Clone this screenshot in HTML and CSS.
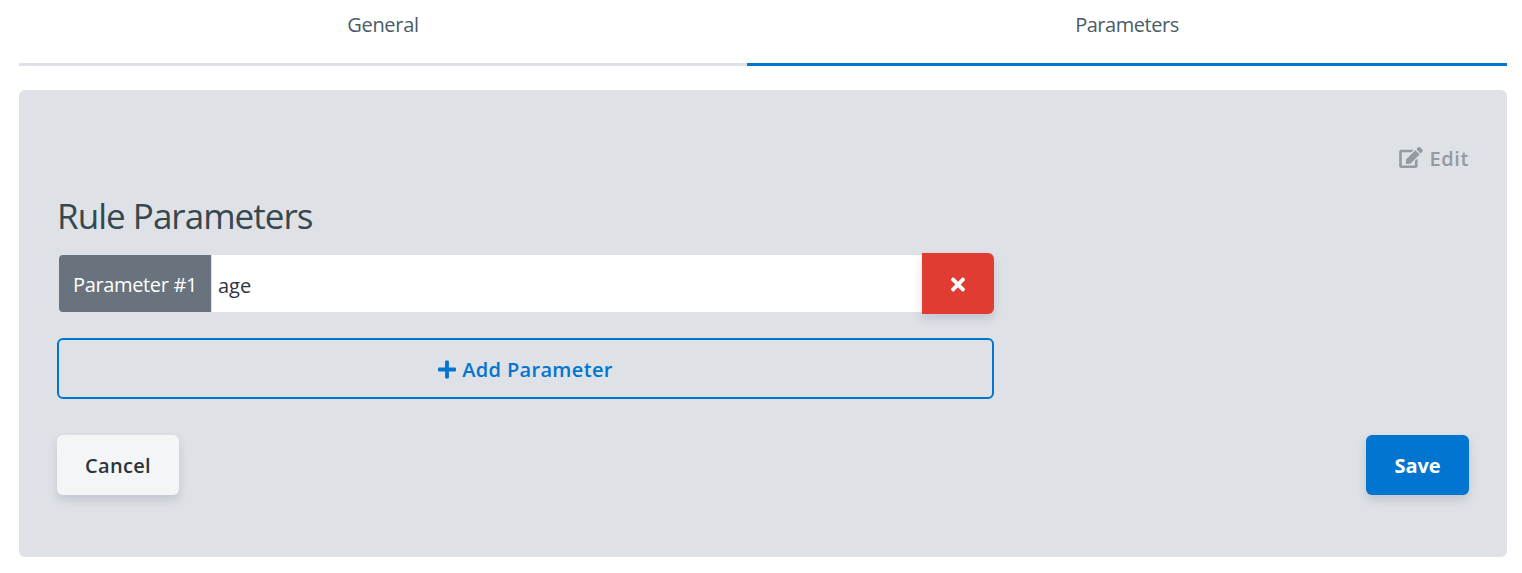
FILE: index.html
```html
<!DOCTYPE html>
<html lang="en">
<head>
<meta charset="utf-8">
<title>Rule Parameters</title>
<link rel="stylesheet" href="styles.css">
</head>
<body>
<nav class="tabs">
  <a class="tab tab-general"><span>General</span></a>
  <a class="tab tab-parameters active"><span>Parameters</span></a>
</nav>
<main class="panel">
  <div class="toolbar">
    <button class="edit">
      <svg class="icon-edit" viewBox="0 0 576 512"><path d="M402.6 83.2l90.2 90.2c3.8 3.8 3.8 10 0 13.8L274.4 405.6l-92.8 10.3c-12.4 1.4-22.9-9.1-21.5-21.5l10.3-92.8L388.8 83.2c3.8-3.8 10-3.8 13.8 0zm162-22.9l-48.8-48.8c-15.2-15.2-39.9-15.2-55.2 0l-35.4 35.4c-3.8 3.8-3.8 10 0 13.8l90.2 90.2c3.8 3.8 10 3.8 13.8 0l35.4-35.4c15.2-15.3 15.2-40 0-55.2zM384 346.2V448H64V128h229.8c3.2 0 6.2-1.3 8.5-3.5l40-40c7.6-7.6 2.2-20.5-8.5-20.5H48C21.5 64 0 85.5 0 112v352c0 26.5 21.5 48 48 48h352c26.5 0 48-21.5 48-48V306.2c0-10.7-12.9-16-20.5-8.5l-40 40c-2.2 2.3-3.5 5.3-3.5 8.5z"/></svg>
      <span>Edit</span>
    </button>
  </div>
  <h1 class="title">Rule Parameters</h1>
  <div class="row">
    <label class="addon" for="param"><span>Parameter #1</span></label>
    <input class="field" id="param" value="age">
    <button class="remove" aria-label="Remove">
      <svg class="icon-times" viewBox="0 0 352 512"><path d="M242.72 256l100.07-100.07c12.28-12.28 12.28-32.19 0-44.48l-22.24-22.24c-12.28-12.28-32.19-12.28-44.48 0L176 189.28 75.93 89.21c-12.28-12.28-32.19-12.28-44.48 0L9.21 111.45c-12.28 12.28-12.28 32.19 0 44.48L109.28 256 9.21 356.07c-12.28 12.28-12.28 32.19 0 44.48l22.24 22.24c12.28 12.28 32.2 12.28 44.48 0L176 322.72l100.07 100.07c12.28 12.28 32.2 12.28 44.48 0l22.24-22.24c12.28-12.28 12.28-32.19 0-44.48L242.72 256z"/></svg>
    </button>
  </div>
  <button class="add">
    <svg class="icon-plus" viewBox="0 0 448 512"><path d="M416 208H272V64c0-17.67-14.33-32-32-32h-32c-17.67 0-32 14.33-32 32v144H32c-17.67 0-32 14.33-32 32v32c0 17.67 14.33 32 32 32h144v144c0 17.67 14.33 32 32 32h32c17.67 0 32-14.33 32-32V304h144c17.67 0 32-14.33 32-32v-32c0-17.67-14.33-32-32-32z"/></svg>
    <span>Add Parameter</span>
  </button>
  <div class="actions">
    <button class="btn cancel">Cancel</button>
    <button class="btn save">Save</button>
  </div>
</main>
</body>
</html>
```
FILE: styles.css
```css
* { box-sizing: border-box; }
body {
  margin: 0;
  padding: 0 15px 0 19px;
  background: #fff;
  color: #374750;
  font: 20px/30px "Segoe UI", "Open Sans", "Noto Sans", sans-serif;
}
button, input { font: inherit; border: 0; margin: 0; padding: 0; }
svg { display: block; fill: currentColor; flex: none; }
.tabs { display: flex; height: 66px; }
.tab {
  display: flex;
  justify-content: center;
  padding-top: 10px;
  border-bottom: 3px solid #dee2e6;
  color: #4a5c66;
}
.tab-general { width: 728px; }
.tab-parameters { width: 760px; }
.tab.active { border-color: #0275d0; }
.tab span { letter-spacing: -0.45px; }
.tab-general span { letter-spacing: -0.3px; }
.panel {
  display: flex;
  flex-direction: column;
  height: 467px;
  margin-top: 24px;
  padding: 54px 38px 0;
  border-radius: 6px;
  background: #dee1e6;
}
.toolbar { display: flex; justify-content: flex-end; height: 30px; }
.edit {
  display: flex;
  align-items: center;
  gap: 7px;
  background: none;
  color: #939ba1;
  font-weight: 600;
  letter-spacing: 0.6px;
}
.icon-edit { width: 24px; height: 21px; margin-top: -3px; }
.title {
  margin: 17px 0 0;
  height: 62px;
  line-height: 50px;
  font-size: 35px;
  font-weight: 400;
  letter-spacing: -0.97px;
}
.row { display: flex; align-items: center; width: 937px; height: 61px; padding-left: 2px; }
.addon {
  display: flex;
  align-items: center;
  justify-content: center;
  width: 152px;
  height: 57px;
  padding-top: 2px;
  border-radius: 4px 0 0 4px;
  background: #69737d;
  color: #fff;
}
.addon span { letter-spacing: -0.35px; white-space: nowrap; }
.field {
  flex: 1;
  min-width: 0;
  height: 57px;
  padding: 4px 6px 0;
  border-left: 1px solid #dee1e6;
  background: #fff;
  color: #2e353b;
}
.remove {
  display: flex;
  align-items: center;
  justify-content: center;
  width: 72px;
  height: 61px;
  border-radius: 0 6px 6px 0;
  background: #e03c32;
  color: #fff;
  box-shadow: 0 5px 10px rgba(60, 66, 100, .17);
}
.icon-times { width: 14px; height: 21px; margin-top: 2px; }
.add {
  display: flex;
  align-items: center;
  justify-content: center;
  gap: 6px;
  width: 937px;
  height: 61px;
  margin-top: 24px;
  padding-top: 2px;
  border: 2px solid #0275d0;
  border-radius: 6px;
  background: none;
  color: #0275d0;
  font-weight: 600;
  letter-spacing: 0.33px;
}
.icon-plus { width: 18px; height: 21px; margin-top: -1px; }
.actions { display: flex; justify-content: space-between; margin-top: 36px; }
.btn {
  height: 60px;
  padding-top: 2px;
  border-radius: 6px;
  font-weight: 600;
  box-shadow: 0 5px 10px rgba(60, 66, 100, .17);
}
.cancel { width: 122px; background: #f3f5f7; color: #2b343a; letter-spacing: 0.35px; }
.save { width: 103px; background: #0275d0; color: #fff; font-weight: 700; letter-spacing: -0.1px; }
```
